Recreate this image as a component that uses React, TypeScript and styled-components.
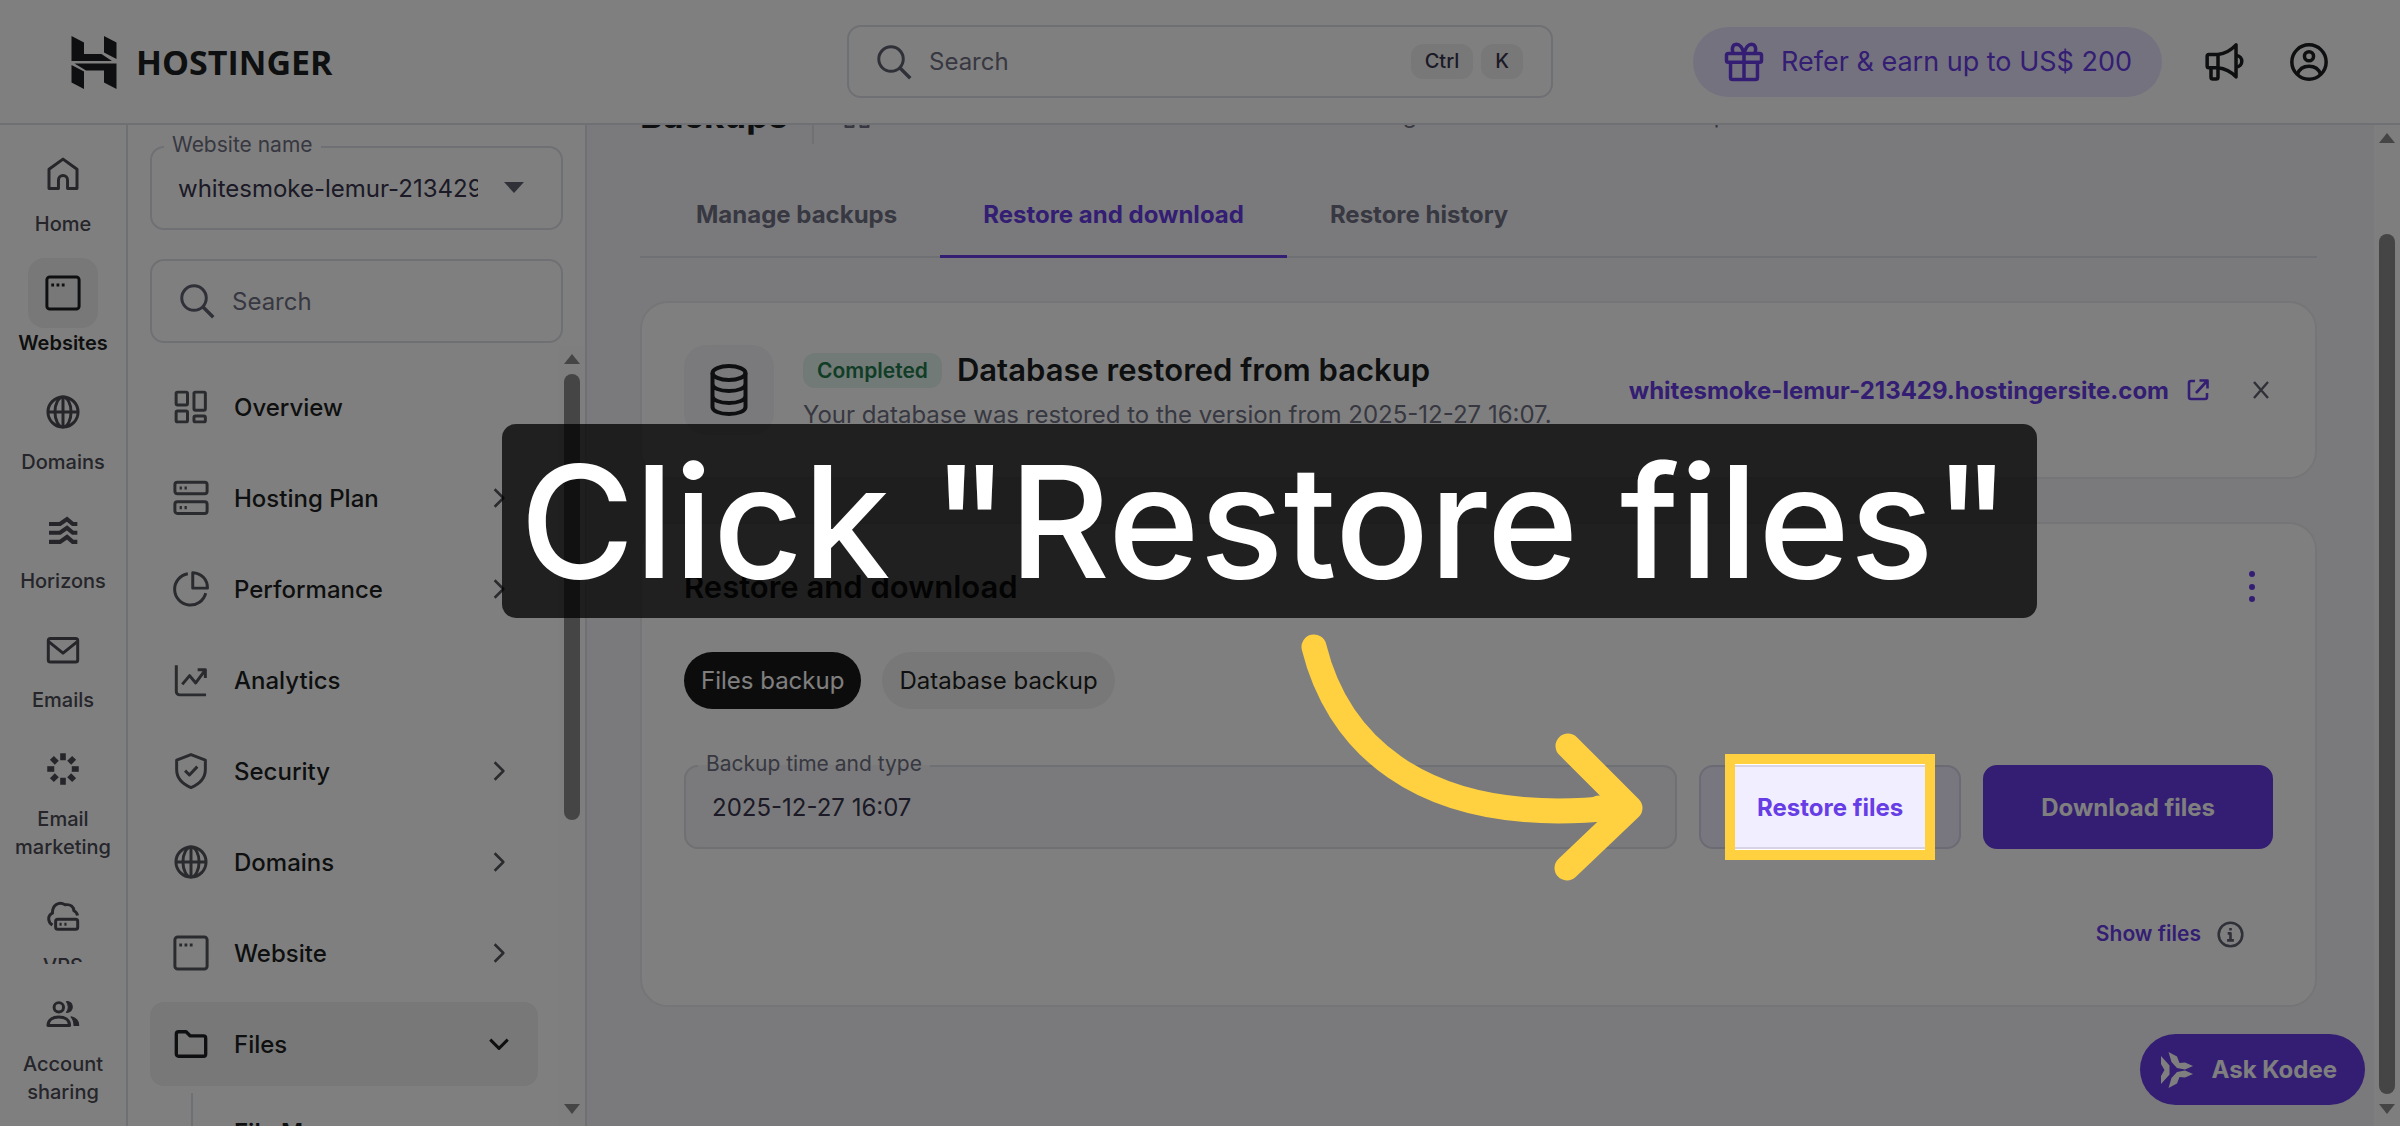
import React from "react";
import styled, { createGlobalStyle, css } from "styled-components";

const c = {
  ink: "#1d1e20",
  sub: "#5f6170",
  muted: "#6f7182",
  line: "#dfe0e6",
  soft: "#f1f1f2",
  page: "#f4f4f8",
  purple: "#673de6",
  lilac: "#ebe4ff",
  yellow: "#ffd140",
};

const GlobalStyle = createGlobalStyle`
  *, *::before, *::after { box-sizing: border-box; }
  body { margin: 0; background: ${c.page}; }
  body, button, input, select { font-family: Inter, "Liberation Sans", sans-serif; font-size: 24px; color: ${c.ink}; }
  button { border: 0; background: none; padding: 0; cursor: pointer; }
  a { text-decoration: none; color: inherit; }
  h1, h2, p, ul { margin: 0; padding: 0; }
  ul { list-style: none; }
  svg { display: block; flex: none; }
`;

const Screen = styled.div`
  position: relative;
  display: flex;
  flex-direction: column;
  height: 100vh;
  overflow: hidden;
`;

/* Header */

const Header = styled.header`
  position: relative;
  z-index: 2;
  flex: none;
  display: grid;
  grid-template-columns: 1fr minmax(0, 706px) 1fr;
  align-items: center;
  height: 125px;
  padding: 0 70px;
  background: #fff;
  border-bottom: 2px solid ${c.line};
`;

const Logo = styled.a`
  display: flex;
  align-items: center;
  gap: 18px;
  font-family: "Open Sans", "Noto Sans", sans-serif;
  font-size: 34px;
  font-weight: 700;
`;

const SearchBox = styled.label<{ $tall?: boolean }>`
  display: flex;
  align-items: center;
  height: ${(p) => (p.$tall ? 84 : 73)}px;
  padding: ${(p) => (p.$tall ? "0 20px 0 24px" : "0 28px 0 24px")};
  gap: 14px;
  border: 2px solid ${c.line};
  border-radius: 14px;
  color: ${c.sub};

  input {
    flex: 1;
    min-width: 0;
    padding: 0;
    border: 0;
    outline: 0;
    background: none;
  }
  input::placeholder { color: ${c.muted}; opacity: 1; }
`;

const Keys = styled.span`
  display: flex;
  gap: 8px;
`;

const Key = styled.kbd`
  padding: 0 14px;
  border-radius: 12px;
  background: ${c.soft};
  font: 500 20px/35px Inter, sans-serif;
  color: #36344d;
`;

const HeaderActions = styled.div`
  display: flex;
  justify-content: flex-end;
  align-items: center;
  gap: 42px;
`;

const Refer = styled.a`
  display: flex;
  align-items: center;
  gap: 16px;
  height: 70px;
  padding: 0 30px;
  border-radius: 35px;
  background: ${c.lilac};
  color: ${c.purple};
  font-size: 27px;
  white-space: nowrap;
`;

/* Left columns */

const Body = styled.div`
  flex: 1;
  min-height: 0;
  display: flex;
`;

const Rail = styled.nav`
  flex: none;
  display: flex;
  flex-direction: column;
  width: 128px;
  background: #fff;
  border-right: 2px solid ${c.line};
`;

const RailList = styled.div`
  flex: 1;
  min-height: 0;
  overflow: hidden;
  display: flex;
  flex-direction: column;
  gap: 20px;
  padding-top: 14px;
`;

const RailFoot = styled.div`
  padding: 15px 0 20px;
`;

const RailItem = styled.a<{ $active?: boolean }>`
  display: flex;
  flex-direction: column;
  align-items: center;
  gap: 1px;
  font-size: 20px;
  line-height: 28px;
  font-weight: ${(p) => (p.$active ? 600 : 500)};
  color: ${(p) => (p.$active ? c.ink : "#4a4b55")};
  text-align: center;
`;

const RailIcon = styled.span<{ $active?: boolean }>`
  display: grid;
  place-items: center;
  width: 70px;
  height: 70px;
  border-radius: 16px;
  background: ${(p) => (p.$active ? c.soft : "transparent")};
`;

const Sidebar = styled.aside`
  flex: none;
  display: flex;
  flex-direction: column;
  width: 459px;
  padding: 21px 0 0 22px;
  background: #fff;
  border-right: 2px solid ${c.line};
`;

const SideFields = styled.div`
  display: flex;
  flex-direction: column;
  gap: 29px;
  padding-right: 22px;
`;

const Field = styled.fieldset<{ $filled?: boolean }>`
  position: relative;
  flex: 1;
  min-width: 0;
  margin: -14px 0 0;
  padding: 0 0 14px;
  border: 2px solid ${c.line};
  border-radius: 14px;
  background: ${(p) => (p.$filled ? c.page : "none")};

  legend {
    margin-left: 12px;
    padding: 0 8px 4px;
    font-size: 21px;
    line-height: 26px;
    color: ${c.muted};
  }
  input, select {
    display: block;
    width: 100%;
    height: 52px;
    padding: 0 26px;
    border: 0;
    outline: 0;
    background: none;
    color: #36344d;
  }
  select {
    appearance: none;
    padding-right: 83px;
    overflow: hidden;
    text-overflow: clip;
  }
`;

const Triangle = styled.span<{ $size?: number; $up?: boolean }>`
  flex: none;
  width: 0;
  height: 0;
  border: ${(p) => p.$size ?? 8}px solid transparent;
  ${(p) =>
    p.$up
      ? css`border-top: 0; border-bottom: 10px solid #8a8a8a;`
      : css`border-bottom: 0; border-top: 10px solid #8a8a8a;`}
`;

const SelectCaret = styled(Triangle)`
  position: absolute;
  right: 37px;
  bottom: 35px;
  border-top: 11px solid ${c.sub};
  pointer-events: none;
`;

const MenuArea = styled.div`
  flex: 1;
  min-height: 0;
  display: flex;
  justify-content: space-between;
  margin-top: 3px;
`;

const Menu = styled.ul`
  flex: 1;
  display: flex;
  flex-direction: column;
  gap: 7px;
  padding-top: 19px;
  max-width: 388px;
  overflow: hidden;
`;

const MenuLink = styled.a<{ $open?: boolean }>`
  display: flex;
  align-items: center;
  gap: 22px;
  height: 84px;
  padding: 0 24px 0 20px;
  border-radius: 14px;
  font-weight: 500;
  background: ${(p) => (p.$open ? c.soft : "transparent")};

  > svg { color: ${(p) => (p.$open ? c.ink : "#55565c")}; }
  > span { flex: 1; }
`;

const SubMenu = styled.div`
  margin-left: 41px;
  padding: 23px 0 20px 41px;
  border-left: 2px solid ${c.line};
  font-weight: 600;
  line-height: 34px;
`;

const Track = styled.div`
  flex: none;
  display: flex;
  flex-direction: column;
  align-items: center;
  width: 26px;
  padding: 8px 0 12px;
  background: #fcfcfc;
`;

const Thumb = styled.span<{ $before: number; $grow: number }>`
  flex: ${(p) => p.$grow} 1 0;
  width: 16px;
  margin: ${(p) => p.$before}px 0 10px;
  border-radius: 8px;
  background: #8a8a8a;
`;

const Rest = styled.span<{ $grow: number }>`
  flex: ${(p) => p.$grow} 1 0;
`;

/* Main column */

const Content = styled.main`
  flex: 1;
  min-width: 0;
  padding: 0 57px 0 53px;
  background: ${c.page};
`;

const TitleRow = styled.div`
  display: flex;
  align-items: center;
  height: 58px;
  margin-top: -39px;

  h1 {
    padding-right: 24px;
    border-right: 2px solid ${c.line};
    font-size: 35px;
    line-height: 58px;
    font-weight: 700;
  }
`;

const Crumbs = styled.nav`
  display: flex;
  align-items: center;
  gap: 11px;
  padding-left: 26px;
  color: ${c.muted};
  font-size: 23px;
`;

const Tabs = styled.div`
  display: flex;
  margin-top: 36px;
  padding-left: 13px;
  box-shadow: inset 0 -2px ${c.line};
`;

const Tab = styled.button<{ $active?: boolean }>`
  padding: 20px 43px 25px;
  border-bottom: 3px solid ${(p) => (p.$active ? c.purple : "transparent")};
  color: ${(p) => (p.$active ? c.purple : c.muted)};
  font-weight: 700;
  line-height: 30px;
`;

const Card = styled.section`
  margin-top: 43px;
  padding: 42px;
  border: 2px solid #ebebf0;
  border-radius: 28px;
  background: #fff;

  h2 { font-size: 31px; font-weight: 600; }
`;

const Notice = styled(Card)`
  display: flex;
  align-items: center;
  gap: 29px;
`;

const Tile = styled.span`
  display: grid;
  place-items: center;
  flex: none;
  width: 90px;
  height: 90px;
  border-radius: 22px;
  background: ${c.page};
`;

const NoticeText = styled.div`
  flex: 1;
  display: flex;
  flex-direction: column;
  gap: 6px;

  p { color: ${c.muted}; line-height: 34px; }
`;

const NoticeTitle = styled.div`
  display: flex;
  align-items: center;
  gap: 15px;
  line-height: 44px;
`;

const Badge = styled.span`
  padding: 0 14px;
  border-radius: 12px;
  background: #e3f5ec;
  color: #237a4e;
  font-size: 21px;
  line-height: 35px;
  font-weight: 600;
`;

const SiteLink = styled.a`
  display: flex;
  align-items: center;
  gap: 17px;
  color: ${c.purple};
  font-weight: 700;
`;

const Dismiss = styled.button`
  margin-left: 10px;
  color: ${c.sub};
`;

const CardHead = styled.div`
  display: flex;
  align-items: center;
  justify-content: space-between;
  line-height: 42px;
`;

const Chips = styled.div`
  display: flex;
  gap: 21px;
  margin-top: 44px;
`;

const Chip = styled.button<{ $on?: boolean }>`
  height: 57px;
  padding: 0 17px;
  border-radius: 29px;
  background: ${(p) => (p.$on ? "#18191b" : c.soft)};
  color: ${(p) => (p.$on ? "#fff" : c.ink)};
`;

const Actions = styled.div`
  display: flex;
  gap: 22px;
  margin-top: 56px;
`;

const Spot = styled.div`
  position: relative;
`;

const Button = styled.button<{ $solid?: boolean }>`
  height: 84px;
  padding: 0 56px;
  border: 2px solid ${(p) => (p.$solid ? c.purple : "#d8d4e6")};
  border-radius: 14px;
  background: ${(p) => (p.$solid ? c.purple : "#f1eeff")};
  color: ${(p) => (p.$solid ? "#fff" : c.purple)};
  font-weight: 700;
  white-space: nowrap;
`;

const ShowRow = styled.div`
  display: flex;
  justify-content: flex-end;
  align-items: center;
  gap: 16px;
  margin-top: 64px;
  padding: 0 29px 8px 0;
  color: ${c.sub};

  button { color: ${c.purple}; font-size: 21px; font-weight: 600; line-height: 42px; }
`;

const Kodee = styled.button`
  position: absolute;
  right: 35px;
  bottom: 21px;
  display: flex;
  align-items: center;
  gap: 18px;
  height: 71px;
  padding: 0 28px 0 20px;
  border-radius: 36px;
  background: ${c.purple};
  color: #fff;
  font-weight: 700;
`;

/* Tutorial layer: the frame's outer shadow darkens everything around it */

const Frame = styled.div`
  position: absolute;
  z-index: 10;
  inset: -11px 26px;
  border: 10px solid ${c.yellow};
  box-shadow: 0 0 0 9999px rgba(0, 0, 0, 0.5);
  pointer-events: none;
`;

const Pointer = styled.svg`
  position: absolute;
  z-index: 11;
  right: calc(100% + 54px);
  top: -136px;
  pointer-events: none;
`;

const Banner = styled.div`
  position: absolute;
  z-index: 12;
  top: 424px;
  left: 502px;
  padding: 2px 26px 0 18px;
  border-radius: 14px;
  background: rgba(0, 0, 0, 0.75);
  color: #fff;
  font-size: 156px;
  line-height: 192px;
  font-weight: 500;
  white-space: nowrap;
`;

/* Icons */

const Icon = ({ children, size = 42, w = 1.7 }: { children: React.ReactNode; size?: number; w?: number }) => (
  <svg width={size} height={size} viewBox="0 0 24 24" fill="none" stroke="currentColor" strokeWidth={w} strokeLinejoin="round" aria-hidden="true">
    {children}
  </svg>
);

const home = <path d="M4 9.3 12 3.5l8 5.8v11h-5.4v-4.8a2.6 2.6 0 0 0-5.2 0v4.8H4z" />;
const windowShape = (
  <>
    <rect x="2.8" y="2.8" width="18.4" height="18.4" rx="1.6" />
    <path d="M5.3 7.4h1.6M8.3 7.4h1.6M11.3 7.4h1.6" strokeWidth="1.8" />
  </>
);
const globe = (
  <>
    <circle cx="12" cy="12" r="8.6" />
    <ellipse cx="12" cy="12" rx="4.6" ry="8.6" />
    <path d="M12 3.4v17.2M3.4 12h17.2" />
  </>
);
const horizons = (
  <path d="M4 8h6.300l4-2.800L17.600 8H20.200M4 13h6.300l4-2.800 3.300 2.800h2.600M4 18.200h6.300l4-2.800 3.300 2.800h2.600" strokeWidth="2.400" strokeLinejoin="miter" />
);
const mail = (
  <>
    <rect x="3.600" y="5.400" width="16.800" height="13.500" rx="1.200" />
    <path d="m4 7.400 8 6.400 8-6.400" />
  </>
);
const burst = (
  <g strokeWidth="3.200">
    {[0, 45, 90, 135, 180, 225, 270, 315].map((a) => (
      <path key={a} d="M12 3v4" transform={`rotate(${a} 12 12)`} />
    ))}
  </g>
);
const cloud = (
  <>
    <path d="M6 17.200C3.200 15.500 3 11.800 6 10.400c-.2-4.600 3.600-7 7.200-4.800 3.400-.6 5 1.600 5 3.400 1.200.6 1.900 1.500 2.100 2.700" />
    <rect x="7.800" y="13.800" width="12.600" height="5.800" rx="1.200" />
    <path d="M10 16.700h1.200M12.800 16.700H14" />
  </>
);
const users = (
  <>
    <circle cx="9.600" cy="8.200" r="2.700" />
    <path d="M3.400 18.600c0-3.300 2.700-4.900 6.200-4.900s6.200 1.600 6.200 4.900z" />
    <path d="M14 4.900c4.200-.4 4.600 6.200 0 6.200 1.400-1.800 1.400-4.400 0-6.200zM16.600 13.600c2.800.6 4.400 2.400 4.400 5h-2.700c0-2-.5-3.700-1.700-5z" fill="currentColor" strokeWidth=".6" />
  </>
);
const overview = (
  <>
    <rect x="3.500" y="3.500" width="6.500" height="7.300" rx=".8" />
    <rect x="13.700" y="3.500" width="6.500" height="10.300" rx=".8" />
    <rect x="3.500" y="14.300" width="6.500" height="6.200" rx=".8" />
    <rect x="13.700" y="17.200" width="6.500" height="3.300" rx=".8" />
  </>
);
const server = (
  <>
    <rect x="2.800" y="3" width="18.400" height="6.600" rx="1.400" />
    <rect x="2.800" y="14.200" width="18.400" height="6.600" rx="1.400" />
    <path d="M5.500 6.300h1.300M8.300 6.300h1.300M5.500 17.500h1.300M8.300 17.500h1.300" strokeWidth="1.800" />
  </>
);
const pie = (
  <>
    <path d="M10.200 3.300a9 9 0 1 0 10.200 11" />
    <path d="M13 2.700v8.800h8.400c0-5-3.400-8.600-8.400-8.800z" />
  </>
);
const trend = (
  <>
    <path d="M3.600 3.500v15a2 2 0 0 0 2 2h15" />
    <path d="m7 14.500 4.200-5 3.500 4.200 5.300-7.200M15.800 6.200h4.400v4.600" />
  </>
);
const shield = (
  <>
    <path d="m12 2.600 8.200 3.200v5.400c0 5-3.300 8.300-8.200 10.300-4.900-2-8.200-5.300-8.200-10.300V5.800z" />
    <path d="m8.600 11.800 2.500 2.500 4.500-4.800" />
  </>
);
const folder = <path d="M3.600 6.300c0-.8.500-1.300 1.300-1.300h4.300l2.400 2.400h7.600c.8 0 1.200.5 1.200 1.300v9c0 .8-.4 1.300-1.200 1.300H4.900c-.8 0-1.300-.5-1.300-1.300z" strokeWidth="1.900" />;
const search = (
  <>
    <circle cx="10.300" cy="10.300" r="7" />
    <path d="m15.300 15.300 6 6" strokeWidth="2" />
  </>
);
const gift = (
  <g strokeWidth="2">
    <rect x="2" y="7.200" width="20" height="5" rx="1" />
    <path d="M4.300 12.200v8.600c0 .8.400 1.200 1.200 1.200h13c.8 0 1.200-.4 1.200-1.200v-8.600M12 7.200V22M12 7.200C11 3.500 9.500 1.900 7.700 1.900 5 2 4.800 5.500 6.200 7.200M12 7.200c1-3.700 2.500-5.300 4.300-5.300 2.700.1 2.900 3.600 1.500 5.300" />
  </g>
);
const megaphone = (
  <g strokeWidth="2">
    <path d="M8 7.700H2.800c-.7 0-1 .3-1 1v5.600c0 .7.300 1 1 1H8zM8 7.700c4.500-.5 7.500-2.500 10.300-5.500v18.300c-2.800-2.900-5.800-4.700-10.300-5.200" />
    <path d="M4 15.300v5.200c0 .8.400 1.200 1.100 1.200h1.800c.7 0 1.100-.4 1.100-1.200v-5.200M18.300 8.300c4.400.2 4.400 6.400 0 6.600" />
  </g>
);
const account = (
  <g strokeWidth="2">
    <circle cx="12" cy="12" r="9.800" />
    <circle cx="12" cy="8.700" r="2.600" />
    <path d="M5.400 19c1-3 3.600-4.600 6.600-4.600s5.600 1.600 6.600 4.600" />
  </g>
);
const external = (
  <g strokeWidth="2.600">
    <path d="M9 3H5c-1 0-2 .8-2 2v14c0 1.200 1 2 2 2h14c1.200 0 2-.8 2-2v-4M13.500 2.500h8v8M21 3 10 15" />
  </g>
);
const info = (
  <g strokeWidth="2.300">
    <circle cx="12" cy="12" r="10.500" />
    <path d="M9.500 11H12v6M9 17.200h6M12 6.200v2.300" />
  </g>
);
const right = <path d="m8.500 5 7 7-7 7" />;
const down = <path d="m5 8.500 7 7 7-7" strokeWidth="2.400" />;

const rail = [
  ["Home", home],
  ["Websites", windowShape],
  ["Domains", globe],
  ["Horizons", horizons],
  ["Emails", mail],
  ["Email marketing", burst],
  ["VPS", cloud],
] as const;

const menu = [
  ["Overview", overview, false],
  ["Hosting Plan", server, true],
  ["Performance", pie, true],
  ["Analytics", trend, false],
  ["Security", shield, true],
  ["Domains", globe, true],
  ["Website", windowShape, true],
] as const;

export default function App() {
  return (
    <Screen>
      <GlobalStyle />
      <Header>
        <Logo href="#">
          <svg width="48" height="54" viewBox="0 0 48 54" fill="currentColor" aria-hidden="true">
            <path d="M1.500 1 14 7.500V19h17.500L42 26H1.500zM34 1l12.500 6.500V24L34 17.500zM4.500 28.500h42V54L34 47.500V35.500H16zM1.500 30 14 36.500V54L1.500 47.500z" />
          </svg>
          HOSTINGER
        </Logo>
        <SearchBox>
          <Icon>{search}</Icon>
          <input aria-label="Search" placeholder="Search" />
          <Keys><Key>Ctrl</Key><Key>K</Key></Keys>
        </SearchBox>
        <HeaderActions>
          <Refer href="#"><Icon>{gift}</Icon>Refer &amp; earn up to US$ 200</Refer>
          <button aria-label="Announcements"><Icon>{megaphone}</Icon></button>
          <button aria-label="Account"><Icon>{account}</Icon></button>
        </HeaderActions>
      </Header>

      <Body>
        <Rail>
          <RailList>
            {rail.map(([name, shape]) => (
              <RailItem key={name} href="#" $active={name === "Websites"}>
                <RailIcon $active={name === "Websites"}><Icon>{shape}</Icon></RailIcon>
                {name}
              </RailItem>
            ))}
          </RailList>
          <RailFoot>
            <RailItem href="#"><RailIcon><Icon>{users}</Icon></RailIcon>Account sharing</RailItem>
          </RailFoot>
        </Rail>

        <Sidebar>
          <SideFields>
            <Field>
              <legend><label htmlFor="site">Website name</label></legend>
              <select id="site"><option>whitesmoke-lemur-213429.hostingersite.com</option></select>
              <SelectCaret $size={10} />
            </Field>
            <SearchBox $tall>
              <Icon>{search}</Icon>
              <input aria-label="Search menu" placeholder="Search" />
            </SearchBox>
          </SideFields>
          <MenuArea>
            <Menu>
              {menu.map(([name, shape, more]) => (
                <li key={name}>
                  <MenuLink href="#">
                    <Icon>{shape}</Icon>
                    <span>{name}</span>
                    {more && <Icon size={30} w={2}>{right}</Icon>}
                  </MenuLink>
                </li>
              ))}
              <li>
                <MenuLink href="#" $open>
                  <Icon>{folder}</Icon>
                  <span>Files</span>
                  <Icon size={30}>{down}</Icon>
                </MenuLink>
              </li>
              <li><SubMenu><a href="#">File Manager</a></SubMenu></li>
            </Menu>
            <Track>
              <Triangle $up />
              <Thumb $before={10} $grow={445} />
              <Rest $grow={273} />
              <Triangle />
            </Track>
          </MenuArea>
        </Sidebar>

        <Content>
          <TitleRow>
            <h1>Backups</h1>
            <Crumbs aria-label="Breadcrumb">
              <Icon size={34}>{home}</Icon>
              <span>-</span><a href="#">Websites</a>
              <span>-</span><a href="#">whitesmoke-lemur-213429.hostingersite.com</a>
              <span>-</span><a href="#">Files</a>
              <span>-</span><span>Backups</span>
            </Crumbs>
          </TitleRow>
          <Tabs role="tablist">
            <Tab role="tab">Manage backups</Tab>
            <Tab role="tab" $active>Restore and download</Tab>
            <Tab role="tab">Restore history</Tab>
          </Tabs>

          <Notice>
            <Tile>
              <svg width="42" height="54" viewBox="0 0 42 54" fill="none" stroke="currentColor" strokeWidth="4" aria-hidden="true">
                <ellipse cx="21" cy="10" rx="16.500" ry="7" />
                <path d="M4.500 10v34c0 4 7 7 16.500 7s16.500-3 16.500-7V10M4.500 21c0 4 7 7 16.500 7s16.500-3 16.500-7M4.500 33c0 4 7 7 16.500 7s16.500-3 16.500-7" />
              </svg>
            </Tile>
            <NoticeText>
              <NoticeTitle><Badge>Completed</Badge><h2>Database restored from backup</h2></NoticeTitle>
              <p>Your database was restored to the version from 2025-12-27 16:07.</p>
            </NoticeText>
            <SiteLink href="#">whitesmoke-lemur-213429.hostingersite.com<Icon size={24}>{external}</Icon></SiteLink>
            <Dismiss aria-label="Dismiss"><Icon size={24} w={2.4}><path d="m5 4 14 16m0-16L5 20" /></Icon></Dismiss>
          </Notice>

          <Card>
            <CardHead>
              <h2>Restore and download</h2>
              <button aria-label="More actions">
                <svg width="42" height="42" viewBox="0 0 42 42" fill={c.purple} aria-hidden="true">
                  <circle cx="21" cy="8" r="3" /><circle cx="21" cy="21" r="3" /><circle cx="21" cy="33" r="3" />
                </svg>
              </button>
            </CardHead>
            <Chips>
              <Chip $on>Files backup</Chip>
              <Chip>Database backup</Chip>
            </Chips>
            <Actions>
              <Field $filled>
                <legend><label htmlFor="backup">Backup time and type</label></legend>
                <input id="backup" readOnly value="2025-12-27 16:07" />
              </Field>
              <Spot>
                <Button>Restore files</Button>
                <Frame />
                <Pointer width="346" height="256" viewBox="0 0 346 256" fill="none" stroke={c.yellow} strokeWidth="25" strokeLinecap="round" strokeLinejoin="round" aria-hidden="true">
                  <path d="M15 18C36 103 110 200 314 179" />
                  <path d="M269 117 331 179 268 239" />
                  <path d="M300 179h18" />
                </Pointer>
              </Spot>
              <Button $solid>Download files</Button>
            </Actions>
            <ShowRow>
              <button>Show files</button>
              <Icon size={27}>{info}</Icon>
            </ShowRow>
          </Card>
        </Content>
        <Track>
          <Triangle $up />
          <Thumb $before={91} $grow={1} />
          <Triangle />
        </Track>
      </Body>

      <Kodee>
        <svg width="34" height="38" viewBox="0 0 34 38" fill="currentColor" aria-hidden="true">
          <path d="M1 5 9.500 14.500v9L1 33v-8l3.500-6L1 13zM8.500 1 17 5.500 19.500 12 25 11.500 33 15 25 18.500 17 17 11.500 11zM8.500 37 17 32.500 19.500 26 25 26.500 33 23 25 19.500 17 21 11.500 27z" />
        </svg>
        Ask Kodee
      </Kodee>

      <Banner>Click "Restore files"</Banner>
    </Screen>
  );
}
